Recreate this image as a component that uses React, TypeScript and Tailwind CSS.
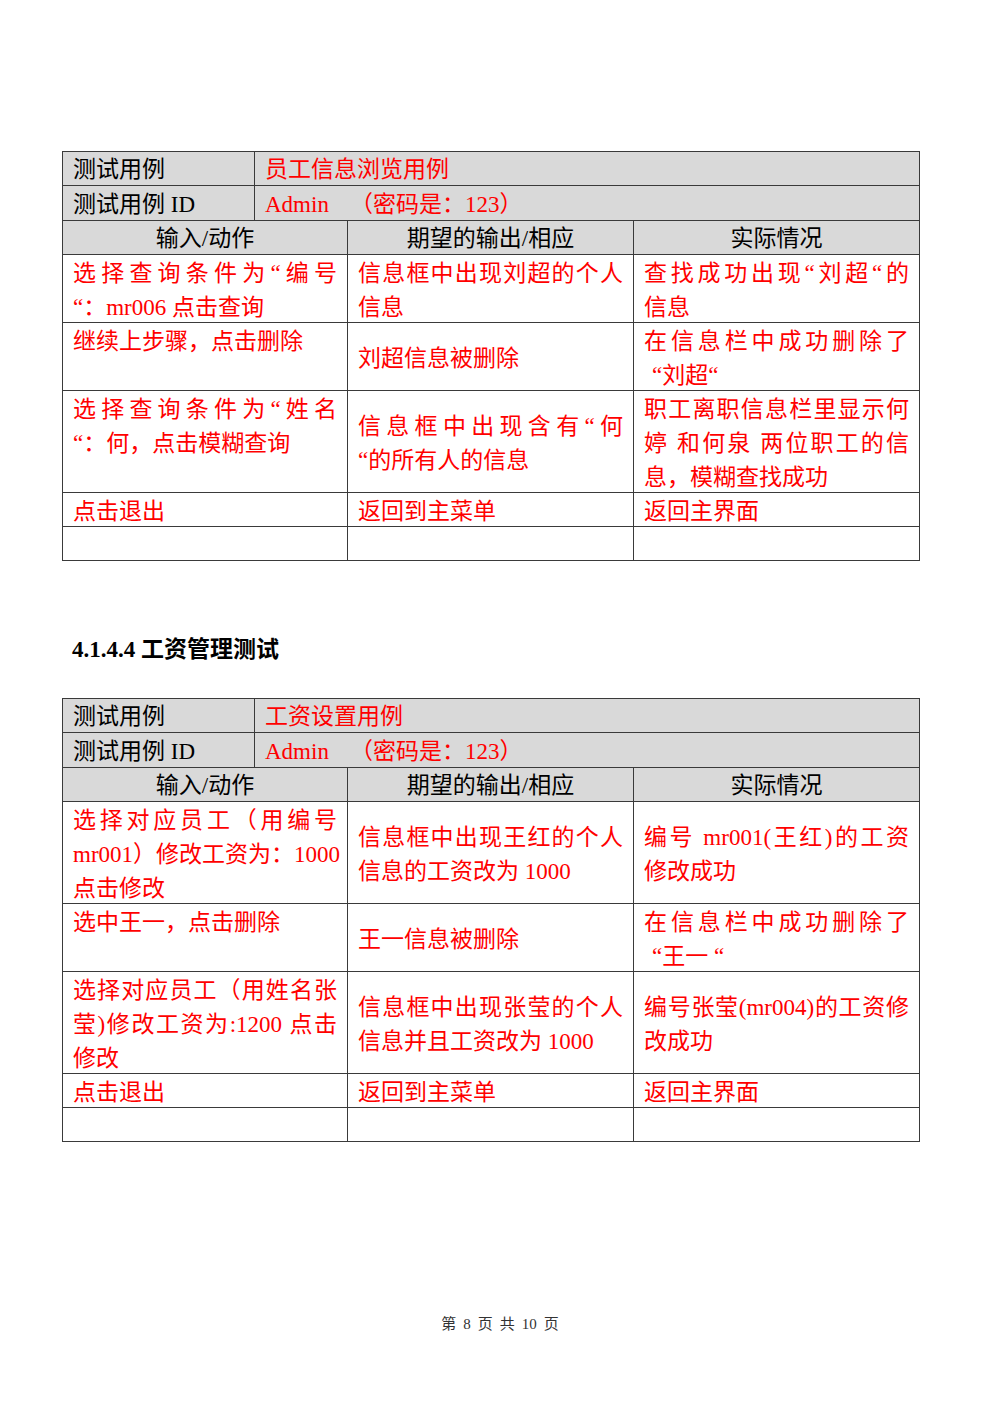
import React from 'react';

type Cell = { lines: string[]; middle?: boolean; indent?: boolean[] };
type Row = [Cell, Cell, Cell];

const font = "font-['Liberation_Serif','Noto_Sans_CJK_SC',serif]";

// 员工信息浏览 test case rows
const browseRows: Row[] = [
  [
    { lines: ['选择查询条件为“编号', '“：mr006 点击查询'] },
    { lines: ['信息框中出现刘超的个人', '信息'] },
    { lines: ['查找成功出现“刘超“的', '信息'] },
  ],
  [
    { lines: ['继续上步骤，点击删除'] },
    { lines: ['刘超信息被删除'], middle: true },
    { lines: ['在信息栏中成功删除了', '“刘超“'], indent: [false, true] },
  ],
  [
    { lines: ['选择查询条件为“姓名', '“：何，点击模糊查询'] },
    { lines: ['信息框中出现含有“何', '“的所有人的信息'], middle: true },
    { lines: ['职工离职信息栏里显示何', '婷 和何泉 两位职工的信', '息，模糊查找成功'] },
  ],
  [{ lines: ['点击退出'] }, { lines: ['返回到主菜单'] }, { lines: ['返回主界面'] }],
  [{ lines: [] }, { lines: [] }, { lines: [] }],
];

// 工资设置 test case rows
const salaryRows: Row[] = [
  [
    { lines: ['选择对应员工（用编号', 'mr001）修改工资为：1000', '点击修改'] },
    { lines: ['信息框中出现王红的个人', '信息的工资改为 1000'], middle: true },
    { lines: ['编号 mr001(王红)的工资', '修改成功'], middle: true },
  ],
  [
    { lines: ['选中王一，点击删除'] },
    { lines: ['王一信息被删除'], middle: true },
    { lines: ['在信息栏中成功删除了', '“王一 “'], indent: [false, true] },
  ],
  [
    { lines: ['选择对应员工（用姓名张', '莹)修改工资为:1200 点击', '修改'] },
    { lines: ['信息框中出现张莹的个人', '信息并且工资改为 1000'], middle: true },
    { lines: ['编号张莹(mr004)的工资修', '改成功'], middle: true },
  ],
  [{ lines: ['点击退出'] }, { lines: ['返回到主菜单'] }, { lines: ['返回主界面'] }],
  [{ lines: [] }, { lines: [] }, { lines: [] }],
];

function DataCell({ cell, wide }: { cell: Cell; wide?: boolean }) {
  return (
    <div
      className={`bg-white px-[10px] text-[#ff0000] flex flex-col ${
        cell.middle ? 'justify-center pt-[4px]' : 'justify-start pt-[2px]'
      } ${wide ? 'col-span-2' : ''}`}
    >
      {cell.lines.map((line, i) => {
        const last = i === cell.lines.length - 1;
        return (
          <div
            key={i}
            className={`leading-[34px] whitespace-pre ${
              last ? 'text-left' : 'text-justify [text-align-last:justify]'
            } ${cell.indent?.[i] ? 'pl-[8px]' : ''}`}
          >
            {line}
          </div>
        );
      })}
    </div>
  );
}

function TestTable({ title, rows, rowsClass }: { title: string; rows: Row[]; rowsClass: string }) {
  return (
    <div
      className={`ml-[62px] w-[858px] grid grid-cols-[191px_92px_285px_285px] gap-px p-px bg-[#3a3a3a] text-[23px] ${rowsClass}`}
    >
      <div className="bg-[#d9d9d9] px-[10px] pt-[4px] flex items-center text-black">测试用例</div>
      <div className="col-span-3 bg-[#d9d9d9] px-[10px] pt-[4px] flex items-center text-[#ff0000]">{title}</div>

      <div className="bg-[#d9d9d9] px-[10px] pt-[4px] flex items-center text-black">测试用例 ID</div>
      <div className="col-span-3 bg-[#d9d9d9] px-[10px] pt-[4px] flex items-center text-[#ff0000]">
        <span>Admin</span>
        <span className="ml-[21px]">（密码是：123）</span>
      </div>

      <div className="col-span-2 bg-[#d9d9d9] pt-[4px] flex items-center justify-center text-black">输入/动作</div>
      <div className="bg-[#d9d9d9] pt-[4px] flex items-center justify-center text-black">期望的输出/相应</div>
      <div className="bg-[#d9d9d9] pt-[4px] flex items-center justify-center text-black">实际情况</div>

      {rows.map((row, i) => (
        <React.Fragment key={i}>
          <DataCell cell={row[0]} wide />
          <DataCell cell={row[1]} />
          <DataCell cell={row[2]} />
        </React.Fragment>
      ))}
    </div>
  );
}

export default function App() {
  return (
    <div className={`w-[1000px] min-h-[1415px] bg-white pt-[151px] ${font}`}>
      <TestTable
        title="员工信息浏览用例"
        rows={browseRows}
        rowsClass="grid-rows-[33px_34px_33px_67px_67px_101px_33px_33px]"
      />

      <h2 className="mt-[72px] ml-[72px] text-[23px] leading-[34px] font-bold text-black">4.1.4.4 工资管理测试</h2>

      <div className="mt-[31px]">
        <TestTable
          title="工资设置用例"
          rows={salaryRows}
          rowsClass="grid-rows-[33px_34px_33px_101px_67px_101px_33px_33px]"
        />
      </div>

      <div className="mt-[172px] flex justify-center gap-[7px] text-[15px] leading-[20px] text-[#333]">
        <span>第</span>
        <span>8</span>
        <span>页</span>
        <span>共</span>
        <span>10</span>
        <span>页</span>
      </div>
    </div>
  );
}
